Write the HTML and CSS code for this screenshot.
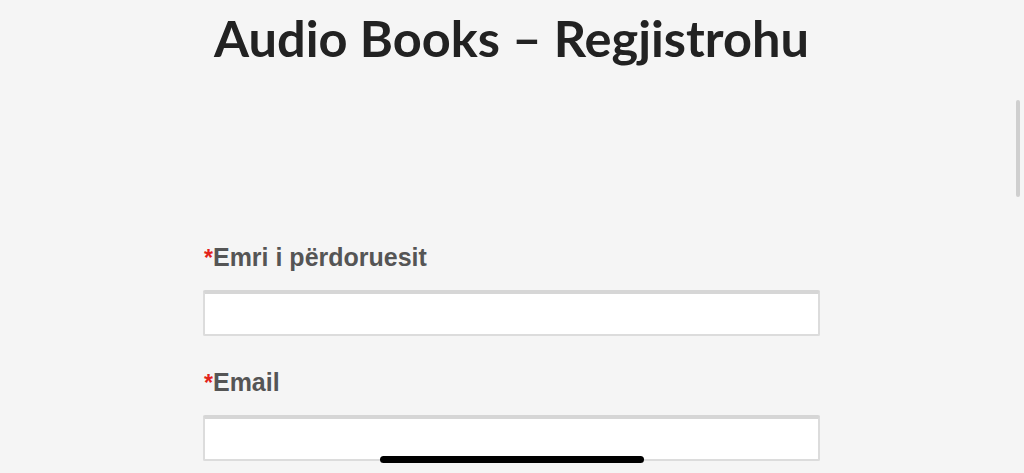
FILE: index.html
```html
<!DOCTYPE html>
<html lang="sq">
<head>
<meta charset="utf-8">
<title>Audio Books – Regjistrohu</title>
<link rel="stylesheet" href="styles.css">
</head>
<body>
<div class="page">
  <h1 class="title">Audio Books – Regjistrohu</h1>
  <form class="form">
    <div class="field">
      <label class="label"><span class="req">*</span>Emri i përdoruesit</label>
      <input class="input" type="text">
    </div>
    <div class="field">
      <label class="label"><span class="req">*</span>Email</label>
      <input class="input" type="email">
    </div>
  </form>
</div>
<div class="scrollbar"></div>
<div class="home-indicator"></div>
</body>
</html>
```
FILE: styles.css
```css
html, body {
  margin: 0;
  padding: 0;
  background: #f5f5f5;
  height: 100%;
  overflow: hidden;
}
body {
  padding-right: 1px;
  box-sizing: border-box;
}
.page {
  width: 617px;
  margin: 0 auto;
}
.title {
  font-family: Lato, "Liberation Sans", sans-serif;
  font-weight: 700;
  font-size: 50.5px;
  line-height: 60px;
  color: #222;
  text-align: center;
  margin: 8px -100px 0;
}
.form {
  margin-top: 175px;
  display: flex;
  flex-direction: column;
  gap: 32px;
}
.field {
  display: flex;
  flex-direction: column;
  gap: 17px;
}
.label {
  font-family: "Liberation Sans", Arial, sans-serif;
  font-weight: 700;
  font-size: 25px;
  line-height: 29px;
  color: #555;
  padding-left: 1px;
}
.req {
  color: #e2231a;
  font-size: 23px;
}
.input {
  box-sizing: border-box;
  width: 617px;
  height: 46px;
  margin: 0;
  background: #fff;
  border: 2px solid #dcdcdc;
  border-top: 4px solid #d6d6d6;
  border-radius: 2px;
}
.scrollbar {
  position: absolute;
  left: 1016px;
  top: 100px;
  width: 4px;
  height: 97px;
  border-radius: 2px;
  background: #cfcfcf;
}
.home-indicator {
  position: absolute;
  left: 380px;
  top: 456px;
  width: 264px;
  height: 7px;
  border-radius: 4px;
  background: #000;
}
```
